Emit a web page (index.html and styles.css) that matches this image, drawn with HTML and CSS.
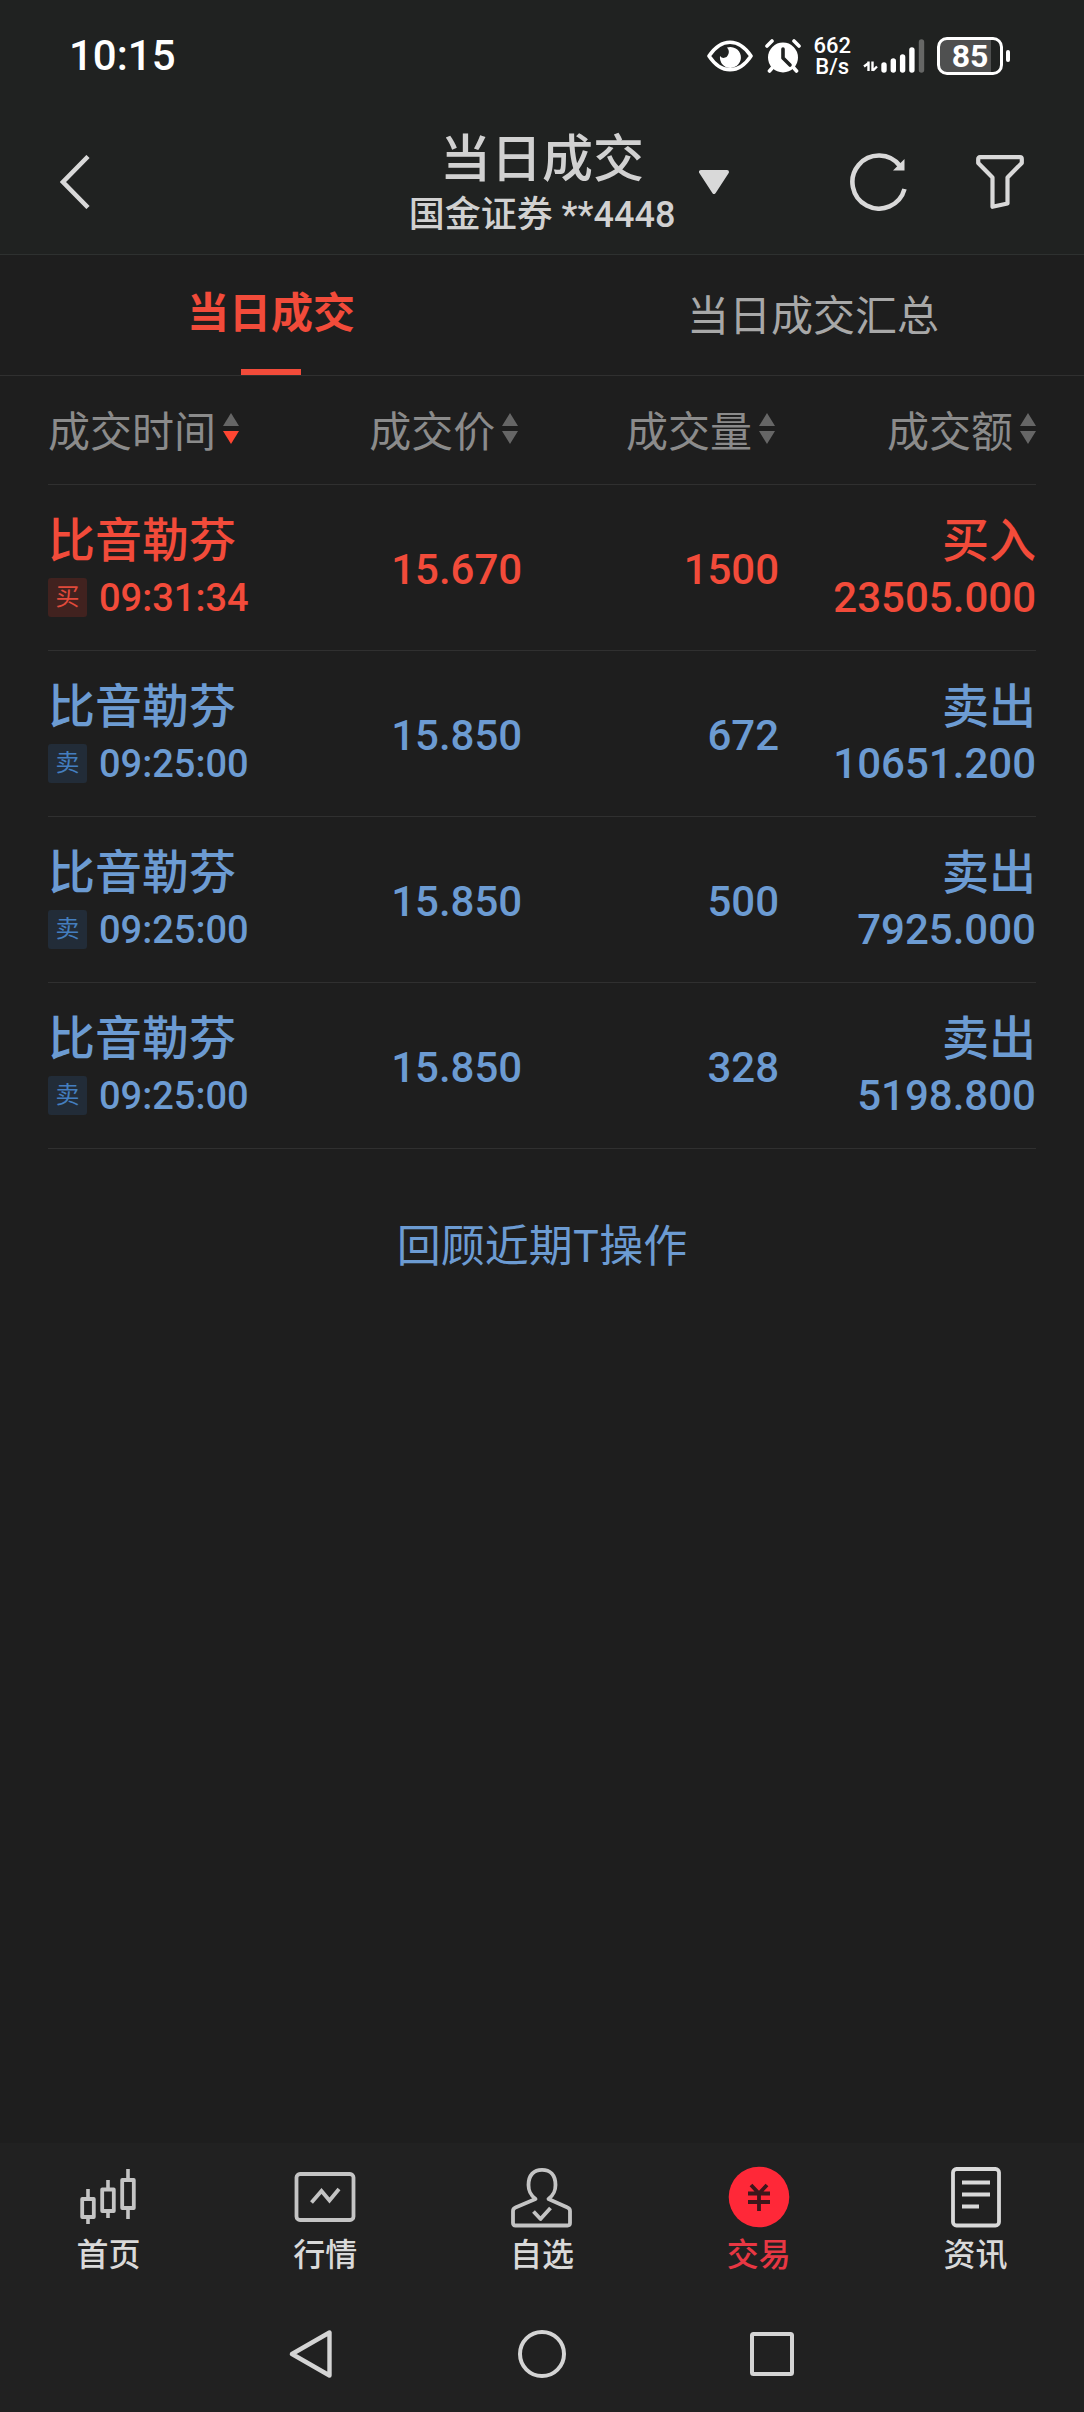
FILE: index.html
```html
<!DOCTYPE html>
<html lang="zh-CN">
<head>
    <meta charset="UTF-8">
    <meta name="viewport" content="width=device-width, initial-scale=1">
    <title>当日成交</title>
    <link rel="stylesheet" href="styles.css">
</head>
<body>
    <!-- 状态栏 -->
    <div class="status-bar">
        <span class="clock">10:15</span>
        <div class="status-icons">
            <svg class="icon-eye" width="46" height="32" viewBox="0 0 46 32">
                <path d="M2 16C8 7 15 2.200 23 2.200S38 7 44 16C38 25 31 29.800 23 29.800S8 25 2 16z" fill="none" stroke="#fff" stroke-width="3.600" stroke-linejoin="round"/>
                <path d="M20 7.500a10.500 10.500 0 1 1-7 8.500a4.600 4.600 0 0 0 8-1c1.500-2.500 1-5.500-1-7.500z" fill="#fff"/>
            </svg>
            <svg class="icon-alarm" width="36" height="34" viewBox="0 0 36 34">
                <circle cx="18" cy="18.500" r="15" fill="#fff"/>
                <path d="M2 7l5-5M34 7l-5-5M8 28l-3.500 4M28 28l3.500 4" stroke="#fff" stroke-width="3.600" stroke-linecap="round"/>
                <path d="M18 10v9l7 7" fill="none" stroke="#202221" stroke-width="3.600" stroke-linecap="round" stroke-linejoin="round"/>
            </svg>
            <div class="speed"><span>662</span><span>B/s</span></div>
            <svg class="icon-signal" width="62" height="34" viewBox="0 0 62 34">
                <path d="M1 27.500l4-3M5.500 22.500v9.500M9.500 22.500v9.500M10 31.500l4-4" fill="none" stroke="#fff" stroke-width="2.400"/>
                <path d="M21 26v5M30.300 22v9M39.600 18v13M48.900 11v20" stroke="#fff" stroke-width="5.400" stroke-linecap="round"/>
                <path d="M58.500 3v28" stroke="#666766" stroke-width="5.400" stroke-linecap="round"/>
            </svg>
            <div class="battery">85</div>
        </div>
    </div>

    <!-- 标题栏 -->
    <header class="header">
        <div class="header-left">
            <button class="icon-button" aria-label="返回">
                <svg width="30" height="54" viewBox="0 0 30 54"><path d="M28 1.500L3 27l25 25.500" fill="none" stroke="#d9d9d9" stroke-width="4.500"/></svg>
            </button>
        </div>
        <div class="header-title">
            <h1>当日成交</h1>
            <p>国金证券 **4448</p>
        </div>
        <div class="header-right">
            <button class="icon-button" aria-label="切换账户">
                <svg width="30" height="24" viewBox="0 0 30 24"><path d="M2 2h26L15 22z" fill="#d9d9d9" stroke="#d9d9d9" stroke-width="4" stroke-linejoin="round"/></svg>
            </button>
            <div class="header-actions">
                <button class="icon-button" aria-label="刷新">
                    <svg width="58" height="58" viewBox="0 0 58 58">
                        <path d="M54.500 36A26.500 26.500 0 1 1 50 13" fill="none" stroke="#d9d9d9" stroke-width="4.600"/>
                        <path d="M54.500 6v11.500H43z" fill="#d9d9d9"/>
                    </svg>
                </button>
                <button class="icon-button" aria-label="筛选">
                    <svg width="48" height="54" viewBox="0 0 48 54"><path d="M4 2.200h40Q45.800 2.200 45.800 4V8L31.500 22.500v26L16.500 51.800V22.500L2.200 8V4Q2.200 2.200 4 2.200z" fill="none" stroke="#d9d9d9" stroke-width="4.200" stroke-linejoin="round"/></svg>
                </button>
            </div>
        </div>
    </header>

    <nav class="tabs">
        <button class="tab active">当日成交</button>
        <button class="tab">当日成交汇总</button>
    </nav>

    <main>
        <table class="deals">
            <thead>
                <tr>
                    <th><button class="sort">成交时间<svg width="16" height="32" viewBox="0 0 16 32"><path class="arrow" d="M8 0l8 13H0z"/><path class="arrow on" d="M0 18h16L8 31z"/></svg></button></th>
                    <th><button class="sort">成交价<svg width="16" height="32" viewBox="0 0 16 32"><path class="arrow" d="M8 0l8 13H0zM0 18h16L8 31z"/></svg></button></th>
                    <th><button class="sort">成交量<svg width="16" height="32" viewBox="0 0 16 32"><path class="arrow" d="M8 0l8 13H0zM0 18h16L8 31z"/></svg></button></th>
                    <th><button class="sort">成交额<svg width="16" height="32" viewBox="0 0 16 32"><path class="arrow" d="M8 0l8 13H0zM0 18h16L8 31z"/></svg></button></th>
                </tr>
            </thead>
            <tbody>
                <tr class="buy">
                    <td><div class="name">比音勒芬</div><div class="time"><span class="badge">买</span>09:31:34</div></td>
                    <td class="num">15.670</td>
                    <td class="num">1500</td>
                    <td><div class="name">买入</div><div class="num">23505.000</div></td>
                </tr>
                <tr class="sell">
                    <td><div class="name">比音勒芬</div><div class="time"><span class="badge">卖</span>09:25:00</div></td>
                    <td class="num">15.850</td>
                    <td class="num">672</td>
                    <td><div class="name">卖出</div><div class="num">10651.200</div></td>
                </tr>
                <tr class="sell">
                    <td><div class="name">比音勒芬</div><div class="time"><span class="badge">卖</span>09:25:00</div></td>
                    <td class="num">15.850</td>
                    <td class="num">500</td>
                    <td><div class="name">卖出</div><div class="num">7925.000</div></td>
                </tr>
                <tr class="sell">
                    <td><div class="name">比音勒芬</div><div class="time"><span class="badge">卖</span>09:25:00</div></td>
                    <td class="num">15.850</td>
                    <td class="num">328</td>
                    <td><div class="name">卖出</div><div class="num">5198.800</div></td>
                </tr>
            </tbody>
        </table>
        <a class="review" href="#">回顾近期T操作</a>
    </main>

    <!-- 底部导航 -->
    <footer class="bottom">
        <nav class="tab-bar">
            <a href="#">
                <svg width="64" height="64" viewBox="0 0 64 64" fill="none" stroke="#c4c4c4">
                    <path d="M12 24v9M12 51v8M32 15v9M32 45v8M52 4v10M52 42v12" stroke-width="3.600"/>
                    <path d="M6.200 34h11.600v18H6.200zM26.200 24.500h11.600v21.500H26.200zM46.200 15h11.600v28H46.200z" stroke-width="3.800" stroke-linejoin="round"/>
                </svg>
                <span>首页</span>
            </a>
            <a href="#">
                <svg width="64" height="64" viewBox="0 0 64 64" fill="none" stroke="#c4c4c4">
                    <rect x="3.500" y="9" width="57" height="46" rx="3.500" stroke-width="3.800"/>
                    <path d="M18.500 37.500l10-11.500 8 9.500L46 24" stroke-width="3.800"/>
                </svg>
                <span>行情</span>
            </a>
            <a href="#">
                <svg width="64" height="64" viewBox="0 0 64 64" fill="none" stroke="#c4c4c4" stroke-width="3.800" stroke-linejoin="round">
                    <path d="M25.500 34C20 29.500 18.500 26 18.500 20C18.500 10 24 4.800 32 4.800S45.500 10 45.500 20C45.500 26 44 29.500 38.500 34L57.500 42.500Q60 43.500 60 46V58Q60 60.500 57.500 60.500H5.500Q3 60.500 3 58V46Q3 43.500 5.500 42.500z"/>
                    <path d="M23.500 46.500l7 7.500L40.500 43"/>
                </svg>
                <span>自选</span>
            </a>
            <a href="#" class="current">
                <svg width="64" height="64" viewBox="0 0 64 64" fill="none">
                    <circle cx="32" cy="32" r="30.300" fill="#ff2838"/>
                    <path d="M24 20l8 8.500L40 20M21 28.500h22M21 37h22M32 28v18" stroke="#3d171b" stroke-width="3.800"/>
                </svg>
                <span>交易</span>
            </a>
            <a href="#">
                <svg width="64" height="64" viewBox="0 0 64 64" fill="none" stroke="#d9d9d9" stroke-width="3.800">
                    <rect x="9" y="4" width="46" height="56.500" rx="3.500"/>
                    <path d="M18 17.500h28M18 29.500h28M18 41.500h17"/>
                </svg>
                <span>资讯</span>
            </a>
        </nav>
        <div class="system-nav">
            <button class="icon-button" aria-label="后退"><svg width="48" height="48" viewBox="0 0 48 48"><path d="M42.500 2.500v43L5 24z" fill="none" stroke="#d4d4d4" stroke-width="4.400" stroke-linejoin="round"/></svg></button>
            <button class="icon-button" aria-label="主屏幕"><svg width="48" height="48" viewBox="0 0 48 48"><circle cx="24" cy="24" r="22" fill="none" stroke="#d4d4d4" stroke-width="4"/></svg></button>
            <button class="icon-button" aria-label="最近任务"><svg width="48" height="48" viewBox="0 0 48 48"><rect x="3" y="4" width="40" height="40" rx="1.500" fill="none" stroke="#d4d4d4" stroke-width="4"/></svg></button>
        </div>
    </footer>
</body>
</html>
```
FILE: styles.css
```css
* { box-sizing: border-box; }
body {
    margin: 0;
    min-height: 100vh;
    display: flex;
    flex-direction: column;
    background: #1e1e1e;
    color: #d1d1d1;
    font-family: "Noto Sans CJK SC", sans-serif;
}
button { padding: 0; border: none; background: none; color: inherit; font: inherit; cursor: pointer; }
a { text-decoration: none; }
svg { display: block; flex: none; }
h1, p { margin: 0; }

/* 状态栏 */
.status-bar {
    display: flex;
    justify-content: space-between;
    align-items: center;
    height: 110px;
    padding: 2px 81px 0 69px;
    background: #202221;
    color: #fff;
    font-family: Roboto, "Noto Sans CJK SC", sans-serif;
}
.clock { font-size: 42px; font-weight: 500; line-height: 60px; }
.status-icons { display: flex; align-items: center; gap: 12px; }
.speed { display: flex; flex-direction: column; font-size: 22px; font-weight: 500; line-height: 21px; text-align: center; }
.battery {
    position: relative;
    width: 66px;
    height: 38px;
    border: 3px solid #fff;
    border-radius: 10px;
    background: linear-gradient(to right, #4f5050 85%, #202221 85%);
    font-size: 32px;
    font-weight: 700;
    line-height: 32px;
    text-align: center;
}
.battery::after {
    content: "";
    position: absolute;
    top: 10px;
    right: -10px;
    width: 4px;
    height: 12px;
    border-radius: 2px;
    background: #fff;
}

/* 标题栏 */
.header {
    display: grid;
    grid-template-columns: 1fr auto 1fr;
    align-items: center;
    padding: 12px 60px;
    background: #202221;
    border-bottom: 1px solid #2e3130;
}
.header-title { text-align: center; }
.header-title h1 { font-size: 51px; font-weight: 500; line-height: 66px; }
.header-title p { font-family: Roboto, "Noto Sans CJK SC", sans-serif; font-size: 36px; font-weight: 500; line-height: 54px; }
.header-left { display: flex; }
.header-right { display: flex; align-items: center; justify-content: space-between; padding-left: 24px; }
.header-actions { display: flex; align-items: center; gap: 68px; }

/* 标签页 */
.tabs { display: flex; height: 121px; border-bottom: 1px solid #303030; }
.tab { flex: 1; padding-bottom: 6px; font-size: 42px; color: #a8a8a8; }
.tab.active {
    display: flex;
    flex-direction: column;
    align-items: center;
    padding-bottom: 0;
    color: #f24b3a;
    font-weight: 700;
    line-height: 110px;
}
.tab.active::after { content: ""; width: 60px; height: 6px; margin-top: auto; background: #f24b3a; }

/* 成交列表 */
main { flex: 1; padding: 0 48px; }
.deals { width: 100%; table-layout: fixed; border-collapse: collapse; }
.deals tr { border-bottom: 1px solid #303030; }
.deals th { width: 26%; height: 108px; padding: 0 4px 2px 0; text-align: right; font-weight: 400; }
.deals th:first-child { width: 22%; }
.deals th:last-child { padding-right: 0; }
.deals td { height: 166px; padding: 0 0 4px; text-align: right; white-space: nowrap; }
.deals td.num { padding: 6px 0 0; }
.deals th:first-child, .deals td:first-child { text-align: left; }
.sort { display: inline-flex; align-items: center; gap: 7px; font-size: 42px; line-height: 60px; color: #8b8b8b; }
.arrow { fill: #666; }
.arrow.on { fill: #ff4632; }
.name { font-size: 47px; font-weight: 500; line-height: 65px; }
.num, .time { font-family: Roboto, "Noto Sans CJK SC", sans-serif; font-weight: 500; line-height: 58px; }
.num { font-size: 42px; }
.time { display: flex; align-items: center; gap: 12px; font-size: 38px; }
.badge {
    width: 39px;
    height: 39px;
    border-radius: 3px;
    font-size: 24px;
    font-weight: 400;
    line-height: 38px;
    text-align: center;
}
.buy { color: #f24b3a; }
.buy .badge { background: #41221f; color: #e04a3b; }
.sell { color: #6c9bd2; }
.sell .badge { background: #222c38; color: #447ebf; }
.review { display: block; padding-top: 62px; font-size: 44px; line-height: 64px; text-align: center; color: #6c9bd2; }

/* 底部导航 */
.bottom { background: #212121; }
.tab-bar { display: flex; padding-top: 22px; }
.tab-bar a {
    flex: 1;
    display: flex;
    flex-direction: column;
    align-items: center;
    color: #d9d9d9;
    font-size: 32px;
    font-weight: 500;
    line-height: 46px;
}
.tab-bar .current { color: #e83743; }
.system-nav { display: flex; justify-content: space-around; padding: 55px 18% 34px; }
```
